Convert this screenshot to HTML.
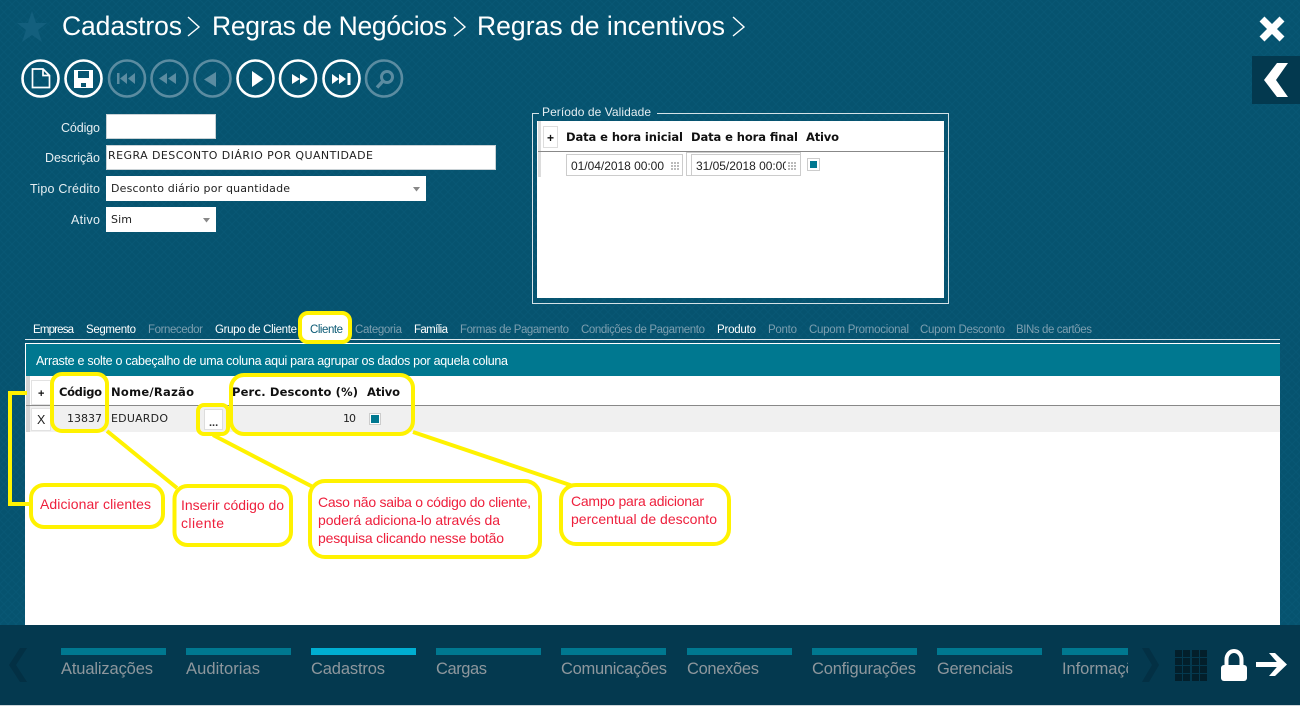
<!DOCTYPE html>
<html lang="pt-BR">
<head>
<meta charset="utf-8">
<title>Regras de incentivos</title>
<style>
html,body{margin:0;padding:0;width:1300px;height:706px;overflow:hidden;background:#06536f}
svg{display:block}
.s{font-family:"Liberation Sans",sans-serif}
.d{font-family:"DejaVu Sans",sans-serif}
.b{font-family:"DejaVu Sans",sans-serif;font-weight:bold;font-size:11.5px;fill:#111}
.t{font-family:"Liberation Sans",sans-serif;font-size:26.5px;fill:#fff}
.l{font-family:"Liberation Sans",sans-serif;font-size:12.5px;fill:#e6eef2}
.tab{font-family:"Liberation Sans",sans-serif;font-size:11.5px;fill:#fff}
.off{fill:#7d9fb0}
.r{font-family:"Liberation Sans",sans-serif;font-size:14px;fill:#ee1f3c}
.n{font-family:"Liberation Sans",sans-serif;font-size:16.5px;fill:#8e979d}
.v{font-family:"DejaVu Sans",sans-serif;font-size:11px;fill:#222}
.y{fill:none;stroke:#fff200;stroke-width:4}
.on{fill:none;stroke:#fff;stroke-width:2.6}
.dis{fill:none;stroke:#5b8ca1;stroke-width:2.6}
</style>
</head>
<body>
<svg width="1300" height="706" viewBox="0 0 1300 706" xmlns="http://www.w3.org/2000/svg">
<defs>
<pattern id="p" width="8" height="8" patternUnits="userSpaceOnUse">
<rect width="8" height="8" fill="#06536f"/>
<path d="M0 0L8 8M8 0L0 8" stroke="#085774" stroke-width="1"/>
</pattern>
<clipPath id="c1"><rect x="1062" y="655" width="66" height="30"/></clipPath>
<clipPath id="c2"><rect x="691" y="155" width="95" height="20"/></clipPath>
</defs>
<rect width="1300" height="706" fill="url(#p)"/>

<!-- header -->
<polygon points="32,11 36,23 47,23 38,30 42,42 32,35 22,42 26,30 17,23 28,23" fill="#135f7d"/>
<text class="t" x="62" y="35" textLength="120">Cadastros</text>
<path d="M188 17L199 27L188 36" fill="none" stroke="#fff" stroke-width="1.4"/>
<text class="t" x="212" y="35" textLength="235">Regras de Negócios</text>
<path d="M454 17L465 27L454 36" fill="none" stroke="#fff" stroke-width="1.4"/>
<text class="t" x="477" y="35" textLength="248">Regras de incentivos</text>
<path d="M733 17L744 27L733 36" fill="none" stroke="#fff" stroke-width="1.4"/>

<path d="M1262 19L1282 39M1282 19L1262 39" stroke="#fff" stroke-width="7"/>
<rect x="1252" y="56" width="48" height="48" fill="#03394f"/>
<polygon points="1264,80 1277,63 1288,63 1276,80 1288,97 1277,97" fill="#fff"/>

<!-- toolbar -->
<circle class="on" cx="40.5" cy="78.5" r="18"/>
<path d="M32.5 69H43L49.5 75.500V87.500H32.500ZM43 69V75.500H49.500" fill="none" stroke="#fff" stroke-width="1.700"/>
<circle class="on" cx="83.500" cy="78.500" r="18"/>
<path d="M74 70H93V88H74ZM78 71V78H89V71ZM81 83V87H86V83Z" fill="#fff" fill-rule="evenodd"/>
<circle class="dis" cx="127" cy="78.500" r="18"/>
<path d="M117 73H119.500V84H117ZM120 78.500L127 73V84ZM128 78.500L135 73V84Z" fill="#5b8ca1"/>
<circle class="dis" cx="169.500" cy="78.500" r="18"/>
<path d="M159 78.500L167 73V84ZM168 78.500L176 73V84Z" fill="#5b8ca1"/>
<circle class="dis" cx="212.500" cy="78.500" r="18"/>
<path d="M204 79.500L216 72V87Z" fill="#5b8ca1"/>
<circle class="on" cx="255.500" cy="78.500" r="18"/>
<path d="M252 71L263.500 79L252 87Z" fill="#fff"/>
<circle class="on" cx="298" cy="78.500" r="18"/>
<path d="M292 74L300 79L292 84ZM300 74L308 79L300 84Z" fill="#fff"/>
<circle class="on" cx="341.500" cy="78.500" r="18"/>
<path d="M332 74L339 79L332 84ZM339 74L346 79L339 84ZM347.500 73H350.500V85H347.500Z" fill="#fff"/>
<circle class="dis" cx="384" cy="78.500" r="18"/>
<circle cx="387" cy="77" r="5.500" fill="none" stroke="#5b8ca1" stroke-width="3"/>
<path d="M383 81L377 87.500" stroke="#5b8ca1" stroke-width="3.500"/>

<!-- form -->
<text class="l" x="61" y="132" textLength="39">Código</text>
<rect x="106.500" y="114.500" width="109" height="24" fill="#fff" stroke="#c9d2d6"/>
<text class="l" x="45" y="162" textLength="55">Descrição</text>
<rect x="106.500" y="145.500" width="389" height="24" fill="#fff" stroke="#c9d2d6"/>
<text class="v" x="108" y="159" textLength="265">REGRA DESCONTO DIÁRIO POR QUANTIDADE</text>
<text class="l" x="30" y="193" textLength="70">Tipo Crédito</text>
<rect x="106" y="176" width="320" height="25" fill="#fff"/>
<text class="v" x="111" y="192" textLength="179">Desconto diário por quantidade</text>
<path d="M413 187H420L416.500 191.500Z" fill="#888"/>
<text class="l" x="71" y="224" textLength="29">Ativo</text>
<rect x="106" y="207" width="110" height="25" fill="#fff"/>
<text class="v" x="111" y="223" textLength="21">Sim</text>
<path d="M203 218H210L206.500 222.500Z" fill="#888"/>

<!-- periodo -->
<path d="M539 113.500H532.500V303.500H948.500V113.500H657" fill="none" stroke="#d5e2e7"/>
<text class="l" x="542" y="116" textLength="109" style="font-size:12px">Período de Validade</text>
<rect x="537" y="121" width="407" height="177" fill="#fff"/>
<rect x="538" y="121" width="3" height="56" fill="#dcdcdc"/>
<rect x="543.500" y="126.500" width="14" height="21" fill="#fff" stroke="#ddd"/>
<text class="s" x="547" y="142" font-size="12" font-weight="bold" fill="#111">+</text>
<text class="b" x="566" y="141" textLength="117">Data e hora inicial</text>
<text class="b" x="691" y="141" textLength="107">Data e hora final</text>
<text class="b" x="806" y="141" textLength="33">Ativo</text>
<rect x="538" y="151" width="406" height="1" fill="#888"/>
<rect x="566.500" y="154.500" width="116" height="21" fill="#fff" stroke="#ccc"/>
<text class="s" x="571" y="170" font-size="12" fill="#222" textLength="93">01/04/2018 00:00</text>
<g fill="#bbb"><rect x="671" y="162" width="2" height="2"/><rect x="674" y="162" width="2" height="2"/><rect x="677" y="162" width="2" height="2"/><rect x="671" y="165" width="2" height="2"/><rect x="674" y="165" width="2" height="2"/><rect x="677" y="165" width="2" height="2"/><rect x="671" y="168" width="2" height="2"/><rect x="674" y="168" width="2" height="2"/><rect x="677" y="168" width="2" height="2"/></g>
<rect x="686.500" y="152.500" width="114" height="23" fill="#fff" stroke="#ccc"/>
<rect x="691.500" y="154.500" width="109" height="21" fill="#fff" stroke="#ccc"/>
<g clip-path="url(#c2)"><text class="s" x="696" y="170" font-size="12" fill="#222" textLength="93">31/05/2018 00:00</text></g>
<g fill="#bbb"><rect x="788" y="162" width="2" height="2"/><rect x="791" y="162" width="2" height="2"/><rect x="794" y="162" width="2" height="2"/><rect x="788" y="165" width="2" height="2"/><rect x="791" y="165" width="2" height="2"/><rect x="794" y="165" width="2" height="2"/><rect x="788" y="168" width="2" height="2"/><rect x="791" y="168" width="2" height="2"/><rect x="794" y="168" width="2" height="2"/></g>
<rect x="807.500" y="158.500" width="12" height="12" fill="#fff" stroke="#ccc"/>
<rect x="810" y="161" width="7" height="7" fill="#007890"/>

<!-- tabs -->
<text class="tab" x="33" y="333" textLength="41">Empresa</text>
<text class="tab" x="86" y="333" textLength="50">Segmento</text>
<text class="tab off" x="148" y="333" textLength="55">Fornecedor</text>
<text class="tab" x="215" y="333" textLength="82">Grupo de Cliente</text>
<text class="tab off" x="355" y="333" textLength="47">Categoria</text>
<text class="tab" x="414" y="333" textLength="34">Família</text>
<text class="tab off" x="460" y="333" textLength="109">Formas de Pagamento</text>
<text class="tab off" x="581" y="333" textLength="124">Condições de Pagamento</text>
<text class="tab" x="717" y="333" textLength="39">Produto</text>
<text class="tab off" x="768" y="333" textLength="29">Ponto</text>
<text class="tab off" x="809" y="333" textLength="100">Cupom Promocional</text>
<text class="tab off" x="920" y="333" textLength="85">Cupom Desconto</text>
<text class="tab off" x="1016" y="333" textLength="76">BINs de cartões</text>
<rect x="25" y="339" width="1255" height="1" fill="#dfe9ed"/>

<!-- grid -->
<rect x="25" y="343" width="1255" height="283" fill="#fff"/>
<rect x="26" y="344" width="1254" height="32" fill="#007890"/>
<text class="s" x="36" y="365" font-size="12.500" fill="#fff" textLength="472">Arraste e solte o cabeçalho de uma coluna aqui para agrupar os dados por aquela coluna</text>
<rect x="26" y="376" width="4" height="56" fill="#d4d4d4"/>
<rect x="30" y="406" width="1250" height="26" fill="#f0f0f0"/>
<rect x="26" y="405" width="1254" height="1" fill="#888"/>
<rect x="31.500" y="380.500" width="19" height="24" fill="#fff" stroke="#e2e2e2"/>
<text class="s" x="38" y="397" font-size="11" font-weight="bold" fill="#111">+</text>
<rect x="31.500" y="408.500" width="19" height="22" fill="#fff" stroke="#e2e2e2"/>
<text class="s" x="37" y="424" font-size="12.500" fill="#222">X</text>
<text class="b" x="59" y="396" textLength="43">Código</text>
<text class="b" x="111" y="396" textLength="83">Nome/Razão</text>
<text class="b" x="232" y="396" textLength="126">Perc. Desconto (%)</text>
<text class="b" x="367" y="396" textLength="33">Ativo</text>
<text class="v" x="67" y="422" textLength="35">13837</text>
<text class="v" x="111" y="422" textLength="57">EDUARDO</text>
<rect x="204.500" y="409.500" width="18" height="20" fill="#fff" stroke="#ddd"/>
<text class="s" x="209" y="426" font-size="11" fill="#333" font-weight="bold">...</text>
<text class="v" x="343" y="422" textLength="13">10</text>
<rect x="369.500" y="413.500" width="11" height="11" fill="#fff" stroke="#ccc"/>
<rect x="371" y="415" width="8" height="8" fill="#007890"/>

<!-- annotations -->
<rect x="300" y="313" width="50" height="29" rx="8" fill="#fff" stroke="#fff200" stroke-width="4"/>
<text class="tab" x="310" y="333" textLength="33" style="fill:#0b5a75">Cliente</text>
<rect class="y" x="52" y="374" width="55" height="57" rx="10"/>
<rect class="y" x="198" y="405" width="30" height="29" rx="6"/>
<rect class="y" x="231" y="375" width="182" height="59" rx="13"/>
<polyline class="y" points="27,393 10,393 10,504 30,504"/>
<path class="y" d="M107 431L177 488M213 435L313 487M413 432L573 486"/>
<rect x="31" y="485" width="132" height="42" rx="13" fill="#fff" stroke="#fff200" stroke-width="4"/>
<rect x="174.500" y="486" width="116.500" height="59" rx="13" fill="#fff" stroke="#fff200" stroke-width="4"/>
<rect x="310" y="481" width="230" height="76" rx="15" fill="#fff" stroke="#fff200" stroke-width="4"/>
<rect x="561" y="485" width="168" height="59" rx="15" fill="#fff" stroke="#fff200" stroke-width="4"/>
<text class="r" x="40" y="509" textLength="111">Adicionar clientes</text>
<text class="r" x="181" y="510" textLength="103">Inserir código do</text>
<text class="r" x="181" y="528" textLength="43">cliente</text>
<text class="r" x="318" y="507" textLength="213">Caso não saiba o código do cliente,</text>
<text class="r" x="318" y="525" textLength="182">poderá adiciona-lo através da</text>
<text class="r" x="318" y="543" textLength="186">pesquisa clicando nesse botão</text>
<text class="r" x="571" y="506" textLength="133">Campo para adicionar</text>
<text class="r" x="571" y="524" textLength="146">percentual de desconto</text>

<!-- footer -->
<rect x="0" y="625" width="1300" height="80" fill="#04394f"/>
<rect x="0" y="705" width="1300" height="1" fill="#cfd6da"/>
<polygon points="20,648 27,648 16,665 27,682 20,682 9,665" fill="#033044"/>
<g fill="#007890">
<rect x="61" y="648" width="105" height="7"/><rect x="186" y="648" width="105" height="7"/>
<rect x="436" y="648" width="105" height="7"/><rect x="561" y="648" width="105" height="7"/>
<rect x="687" y="648" width="105" height="7"/><rect x="812" y="648" width="105" height="7"/>
<rect x="937" y="648" width="105" height="7"/><rect x="1062" y="648" width="66" height="7"/>
</g>
<rect x="311" y="648" width="105" height="7" fill="#00aed1"/>
<text class="n" x="61" y="674" textLength="92">Atualizações</text>
<text class="n" x="186" y="674" textLength="74">Auditorias</text>
<text class="n" x="311" y="674" textLength="74">Cadastros</text>
<text class="n" x="436" y="674" textLength="51">Cargas</text>
<text class="n" x="561" y="674" textLength="106">Comunicações</text>
<text class="n" x="687" y="674" textLength="72">Conexões</text>
<text class="n" x="812" y="674" textLength="104">Configurações</text>
<text class="n" x="937" y="674" textLength="76">Gerenciais</text>
<g clip-path="url(#c1)"><text class="n" x="1062" y="674" textLength="90">Informações</text></g>
<polygon points="1142,648 1149,648 1159,665 1149,682 1142,682 1152,665" fill="#033044"/>
<g fill="#031f2b">
<rect x="1175" y="650" width="7" height="7"/><rect x="1183" y="650" width="7" height="7"/><rect x="1192" y="650" width="7" height="7"/><rect x="1200" y="650" width="7" height="7"/>
<rect x="1175" y="658" width="7" height="7"/><rect x="1183" y="658" width="7" height="7"/><rect x="1192" y="658" width="7" height="7"/><rect x="1200" y="658" width="7" height="7"/>
<rect x="1175" y="666" width="7" height="7"/><rect x="1183" y="666" width="7" height="7"/><rect x="1192" y="666" width="7" height="7"/><rect x="1200" y="666" width="7" height="7"/>
<rect x="1175" y="674" width="7" height="7"/><rect x="1183" y="674" width="7" height="7"/><rect x="1192" y="674" width="7" height="7"/><rect x="1200" y="674" width="7" height="7"/>
</g>
<rect x="1221" y="665" width="26" height="16" rx="3" fill="#fff"/>
<path d="M1226.500 666V659.500A7.500 8.500 0 0 1 1241.500 659.500V666" fill="none" stroke="#fff" stroke-width="4"/>
<path d="M1256 662H1279V667H1256ZM1269 653H1275L1287 664.500L1275 676H1269L1279 664.500Z" fill="#fff"/>
</svg>
</body>
</html>
